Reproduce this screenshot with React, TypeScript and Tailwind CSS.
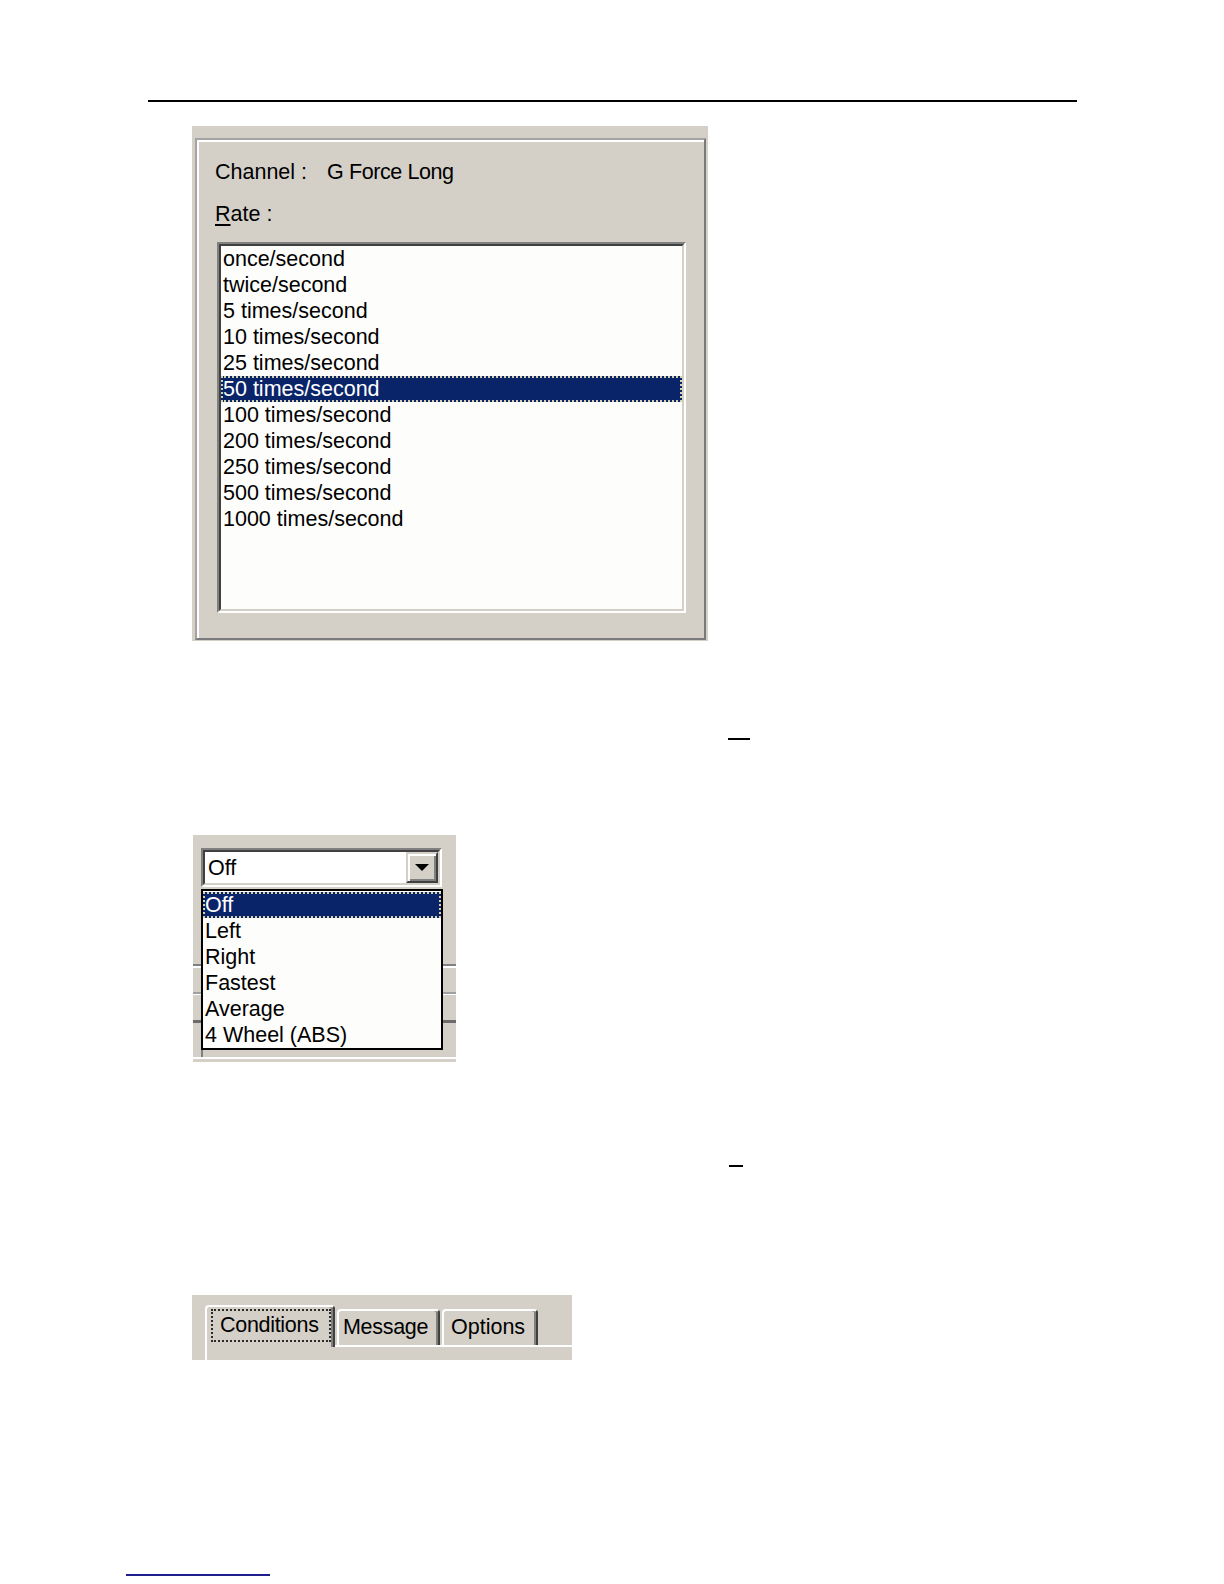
const RATES = [
  'once/second',
  'twice/second',
  '5 times/second',
  '10 times/second',
  '25 times/second',
  '50 times/second',
  '100 times/second',
  '200 times/second',
  '250 times/second',
  '500 times/second',
  '1000 times/second',
];

const MODES = ['Off', 'Left', 'Right', 'Fastest', 'Average', '4 Wheel (ABS)'];

function ListRow({ label, selected }: { label: string; selected: boolean }) {
  return (
    <div
      className={
        selected
          ? 'h-[26px] whitespace-nowrap bg-[#0a246a] pt-[1px] pl-[2px] leading-[25px] text-white outline-2 -outline-offset-2 outline-dotted outline-[#d6d3b0]'
          : 'h-[26px] whitespace-nowrap pt-[1px] pl-[2px] leading-[25px] text-black'
      }
    >
      {label}
    </div>
  );
}

function ArrowDown() {
  return (
    <svg width="14" height="7" viewBox="0 0 14 7" aria-hidden>
      <path d="M0 0h14L7 7z" fill="#000" />
    </svg>
  );
}

export default function App() {
  return (
    <div className="flex min-h-[1584px] w-[1224px] flex-col items-start bg-white font-[Liberation_Sans,Arial,sans-serif] text-[21.5px] text-black">
      {/* page header rule */}
      <div className="mt-[100px] ml-[148px] h-[2px] w-[929px] bg-black" />

      {/* rate dialog */}
      <div className="mt-[24px] ml-[192px] flex h-[515px] w-[516px] flex-col bg-[#d4d0c8] pt-[12px] pr-[2px] pb-[1px] pl-[3px]">
        <div className="flex-1 border-2 border-t-[#a3a3a3] border-r-[#7a7a7a] border-b-[#7a7a7a] border-l-[#a3a3a3]">
          <div className="flex h-full flex-col items-start border-t-2 border-l-2 border-white pt-[17px] pl-[16px]">
            <div className="flex h-[26px] leading-[26px]">
              <span className="w-[112px]">Channel :</span>
              <span className="tracking-[-0.4px]">G Force Long</span>
            </div>
            <div className="mt-[16px] h-[26px] leading-[26px]">
              <span className="underline underline-offset-[3px]">R</span>ate :
            </div>
            <div className="mt-[15px] ml-[2px] h-[371px] w-[469px] border-2 border-t-[#808080] border-r-white border-b-white border-l-[#808080]">
              <div className="h-full border-2 border-t-[#404040] border-r-[#d4d0c8] border-b-[#d4d0c8] border-l-[#404040] bg-[#fdfdfb]">
                {RATES.map((rate) => (
                  <ListRow key={rate} label={rate} selected={rate === '50 times/second'} />
                ))}
              </div>
            </div>
          </div>
        </div>
      </div>

      <div className="mt-[97px] ml-[728px] h-[2px] w-[22px] bg-black" />

      {/* combo with open dropdown */}
      <div className="relative mt-[95px] ml-[193px] flex h-[227px] w-[263px] flex-col items-start bg-[#d4d0c8]">
        <div className="mt-[13px] ml-[8px] h-[39px] w-[241px] border-2 border-t-[#808080] border-r-white border-b-white border-l-[#808080]">
          <div className="flex h-full border-2 border-t-[#404040] border-r-[#d4d0c8] border-b-[#d4d0c8] border-l-[#404040] bg-white">
            <span className="flex-1 pt-[1px] pl-[3px] leading-[31px]">Off</span>
            <div className="flex w-[32px] items-center justify-center border-2 border-t-[#d4d0c8] border-r-[#404040] border-b-[#404040] border-l-[#d4d0c8] bg-[#d4d0c8] shadow-[inset_2px_2px_0_#fff,inset_-2px_-2px_0_#808080]">
              <ArrowDown />
            </div>
          </div>
        </div>

        {/* controls behind the dropdown */}
        <div className="mt-[77px] h-[2px] w-full bg-[#808080]" />
        <div className="h-[2px] w-full bg-white" />
        <div className="mt-[24px] h-[2px] w-full bg-[#a0a0a0]" />
        <div className="h-px w-full bg-white" />
        <div className="mt-[25px] h-[3px] w-full bg-[#6b6b6b]" />
        <div className="mt-[25px] ml-[8px] h-[9px] w-[2px] bg-[#808080]" />
        <div className="h-[2px] w-full bg-white" />

        <div className="absolute top-[54px] left-[8px] w-[242px] border-2 border-black bg-[#fdfdfb] pt-[1px]">
          {MODES.map((mode) => (
            <ListRow key={mode} label={mode} selected={mode === 'Off'} />
          ))}
        </div>
      </div>

      <div className="mt-[103px] ml-[729px] h-[2px] w-[14px] bg-black" />

      {/* tab strip */}
      <div className="mt-[128px] ml-[192px] flex h-[65px] w-[380px] flex-col bg-[#d4d0c8] pt-[10px]">
        <div className="flex items-end pl-[13px]">
          <div className="relative z-10 -mb-[2px] h-[42px] w-[130px] rounded-t-[4px] border-t-2 border-r-2 border-l-2 border-t-white border-r-[#404040] border-l-white bg-[#d4d0c8] shadow-[inset_-2px_0_0_#808080]">
            <div className="mt-[2px] ml-[4px] flex h-[33px] w-[120px] items-center border-2 border-dotted border-[#2a2a2a] pl-[7px] leading-none tracking-[-0.3px]">
              Conditions
            </div>
          </div>
          <div className="ml-[2px] flex h-[36px] w-[103px] items-center rounded-t-[4px] border-t-2 border-r-2 border-l-2 border-t-white border-r-[#404040] border-l-white pl-[4px] leading-none tracking-[-0.3px] shadow-[inset_-2px_0_0_#808080]">
            Message
          </div>
          <div className="ml-[2px] flex h-[36px] w-[96px] items-center rounded-t-[4px] border-t-2 border-r-2 border-l-2 border-t-white border-r-[#404040] border-l-white pl-[7px] leading-none shadow-[inset_-2px_0_0_#808080]">
            Options
          </div>
        </div>
        <div className="ml-[13px] h-[2px] bg-white" />
        <div className="ml-[13px] flex-1 border-l-2 border-white" />
      </div>

      {/* footnote rule */}
      <div className="mt-[214px] ml-[126px] h-[2px] w-[144px] bg-[#1e1e8c]" />
    </div>
  );
}
